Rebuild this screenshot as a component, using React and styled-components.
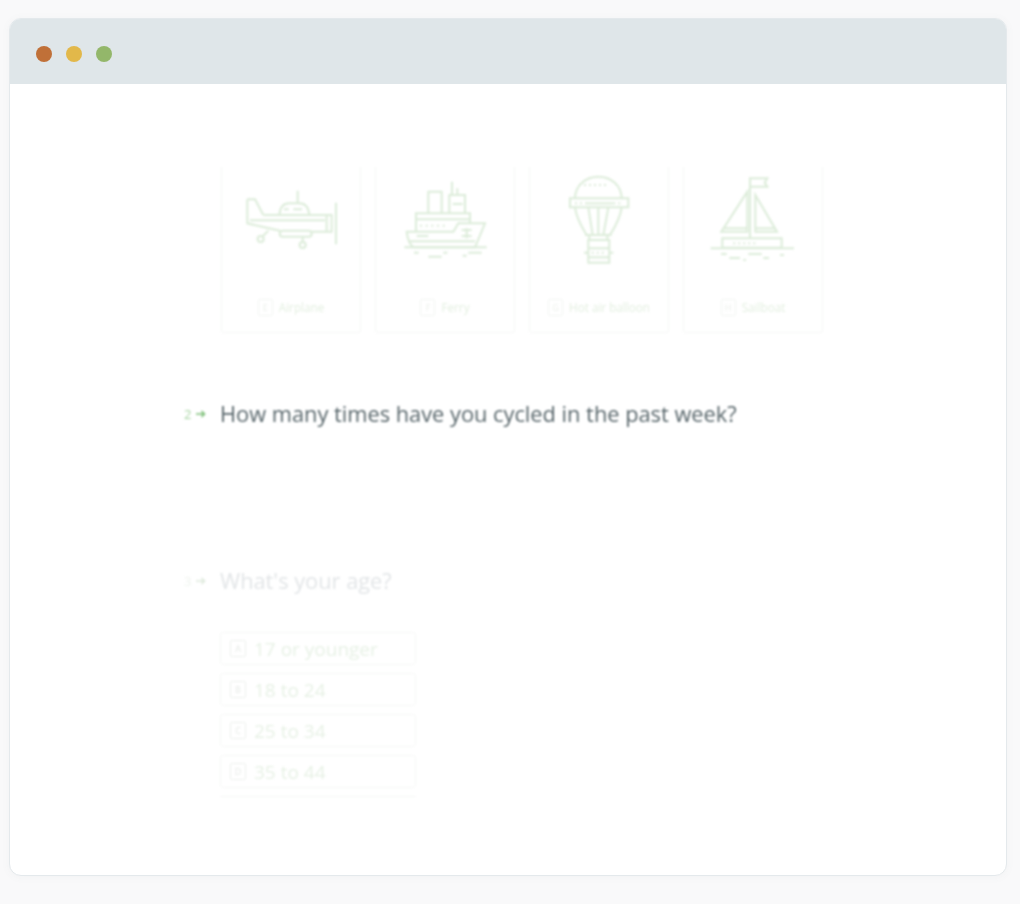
import React from 'react';
import styled, { createGlobalStyle } from 'styled-components';

const GlobalStyle = createGlobalStyle`
  html, body {
    margin: 0;
    padding: 0;
    background: #f9f9fa;
    font-family: "Open Sans", "Liberation Sans", sans-serif;
  }
`;

const Page = styled.div`
  box-sizing: border-box;
  width: 1020px;
  height: 904px;
  padding: 18px 13px 28px 9px;
  overflow: hidden;
`;

const Window = styled.div`
  box-sizing: border-box;
  height: 858px;
  background: #fff;
  border: 1px solid #e4e9ec;
  border-radius: 12px;
  box-shadow: 0 1px 8px rgba(90, 110, 120, 0.05);
  overflow: hidden;
`;

const TitleBar = styled.div`
  display: flex;
  align-items: center;
  gap: 14px;
  height: 65px;
  padding: 5px 0 0 26px;
  box-sizing: border-box;
  background: #dfe6e9;
`;

const Dot = styled.span`
  width: 16px;
  height: 16px;
  border-radius: 50%;
  background: ${(p) => p.$color};
`;

const Content = styled.div`
  padding: 83px 0 0 174px;
  filter: blur(0.8px);
`;

const Cards = styled.div`
  display: flex;
  gap: 14px;
  margin-left: 37px;
`;

const Card = styled.div`
  box-sizing: border-box;
  width: 140px;
  height: 166px;
  border: 1px solid #f6f7f6;
  border-top: 0;
  border-radius: 0 0 3px 3px;
  display: flex;
  flex-direction: column;
  align-items: center;
`;

const Art = styled.svg`
  display: block;
  width: 140px;
  height: 110px;
  margin-left: -1px;
  fill: none;
  stroke: #dcecd9;
  stroke-width: 6;
`;

const CardLabel = styled.div`
  display: flex;
  align-items: center;
  gap: 6px;
  margin-top: 22px;
  font-size: 11.7px;
  line-height: 17px;
  color: #e3efe0;
`;

const Key = styled.span`
  box-sizing: border-box;
  display: flex;
  align-items: center;
  justify-content: center;
  width: ${(p) => (p.$large ? '16px' : '15px')};
  height: 17px;
  border: 1px solid ${(p) => (p.$large ? '#eef1ee' : '#f2f5f2')};
  border-radius: 2px;
  font-size: 9px;
  color: ${(p) => (p.$large ? '#e5e9e5' : '#ebefea')};
`;

const Question = styled.div`
  display: grid;
  grid-template-columns: 36px 1fr;
  align-items: center;
  height: 30px;
  margin-top: ${(p) => p.$top}px;
  color: ${(p) => p.$color};
  font-size: 21.8px;
  line-height: 30px;
`;

const QuestionNumber = styled.div`
  display: flex;
  align-items: center;
  gap: 5px;
  font-size: 13px;
  color: ${(p) => p.$color};
`;

const Arrow = styled.svg`
  width: 10px;
  height: 8px;
  fill: none;
  stroke: ${(p) => p.$color};
  stroke-width: 1.6;
`;

const Options = styled.div`
  display: flex;
  flex-direction: column;
  gap: 8px;
  width: 196px;
  margin: 36px 0 0 36px;
`;

const Option = styled.div`
  box-sizing: border-box;
  display: flex;
  align-items: center;
  gap: 8px;
  height: 33px;
  padding-left: 9px;
  border: 1px solid #f6f7f6;
  border-radius: 3px;
  font-size: 19px;
  color: #e7f1e5;
`;

const OptionEdge = styled.div`
  height: 1px;
  background: #f6f7f6;
`;

const Airplane = () => (
  <Art viewBox="33 21 420 330">
    <path d="M263 92v38M208 165c2-25 12-35 30-35h30c18 0 28 12 30 35" />
    <path d="M160 165h205v50h-60M112 118h23l25 47M112 118v72l98 22M350 165v50M120 181h225" />
    <path d="M218 212h78a9 9 0 0 1 0 18h-78a9 9 0 0 1 0-18zM175 212l-16 16M278 230v14M378 128v125M222 148h14M250 148h26" />
    <circle cx="152" cy="237" r="9" />
    <circle cx="278" cy="255" r="9" />
  </Art>
);

const Ferry = () => (
  <Art viewBox="495 21 420 330">
    <path d="M590 215h140l15-25h80l-30 72H610c-12-10-18-28-20-47z" />
    <path d="M583 262h247M618 215v-55h162v30M618 178h162M655 160V95h40v65M718 160v-55h47v55M726 65v40M742 85v20M620 228h35M600 244h195" />
    <path d="M630 197h85" strokeDasharray="6 11" />
    <path d="M728 132h30M755 210h30M770 205v30M755 228h30M612 278h14M655 290h40M700 278h12M775 278h40M758 287h12" />
  </Art>
);

const Balloon = () => (
  <Art viewBox="27 21 420 330">
    <path d="M165 115c0-38 32-65 70-65s70 27 70 65" />
    <path d="M150 115h175v27H150zM165 142c4 34 22 62 35 83M305 142c-4 34-22 62-35 83M205 142l13 83M265 142l-15 83M235 142v83M195 225h80M208 225v15M262 225v15" />
    <path d="M205 240h63v68h-63zM205 265h63M205 292h63M192 278h13M268 278h12" />
    <path d="M192 75h75M165 130h30M280 130h30M215 278h40" strokeDasharray="6 9" />
    <path d="M195 130h85" />
  </Art>
);

const Sailboat = () => (
  <Art viewBox="489 21 420 330">
    <path d="M690 235V55h52l-8 13 8 12h-52" />
    <path d="M682 95l-78 120h78zM706 105l65 110h-65zM610 205h72M706 205h60" />
    <path d="M607 235h178v28H607z" />
    <path d="M572 265h250M603 282h17M685 282h40M780 285h12M628 294h32M670 300h8M730 294h17" />
    <path d="M640 250h70" strokeDasharray="6 9" />
  </Art>
);

const cards = [
  { art: <Airplane />, letter: 'E', label: 'Airplane' },
  { art: <Ferry />, letter: 'F', label: 'Ferry' },
  { art: <Balloon />, letter: 'G', label: 'Hot air balloon' },
  { art: <Sailboat />, letter: 'H', label: 'Sailboat' },
];

const ages = [
  ['A', '17 or younger'],
  ['B', '18 to 24'],
  ['C', '25 to 34'],
  ['D', '35 to 44'],
];

function QuestionHead({ top, num, text, color, numColor, arrowColor }) {
  return (
    <Question $top={top} $color={color}>
      <QuestionNumber $color={numColor}>
        {num}
        <Arrow $color={arrowColor} viewBox="0 0 10 8">
          <path d="M0 4h8M5.5 1.2 8.5 4 5.5 6.8" />
        </Arrow>
      </QuestionNumber>
      <span>{text}</span>
    </Question>
  );
}

export default function App() {
  return (
    <Page>
      <GlobalStyle />
      <Window>
        <TitleBar>
          <Dot $color="#c07038" />
          <Dot $color="#e2b84a" />
          <Dot $color="#93b76a" />
        </TitleBar>
        <Content>
          <Cards>
            {cards.map((c) => (
              <Card key={c.letter}>
                {c.art}
                <CardLabel>
                  <Key>{c.letter}</Key>
                  {c.label}
                </CardLabel>
              </Card>
            ))}
          </Cards>
          <QuestionHead
            top={66}
            num="2"
            text="How many times have you cycled in the past week?"
            color="#566469"
            numColor="#a5d3a0"
            arrowColor="#7fc07a"
          />
          <QuestionHead
            top={137}
            num="3"
            text="What's your age?"
            color="#e2e5e7"
            numColor="#eef3ed"
            arrowColor="#dfeadd"
          />
          <Options>
            {ages.map(([letter, label]) => (
              <Option key={letter}>
                <Key $large>{letter}</Key>
                {label}
              </Option>
            ))}
            <OptionEdge />
          </Options>
        </Content>
      </Window>
    </Page>
  );
}
